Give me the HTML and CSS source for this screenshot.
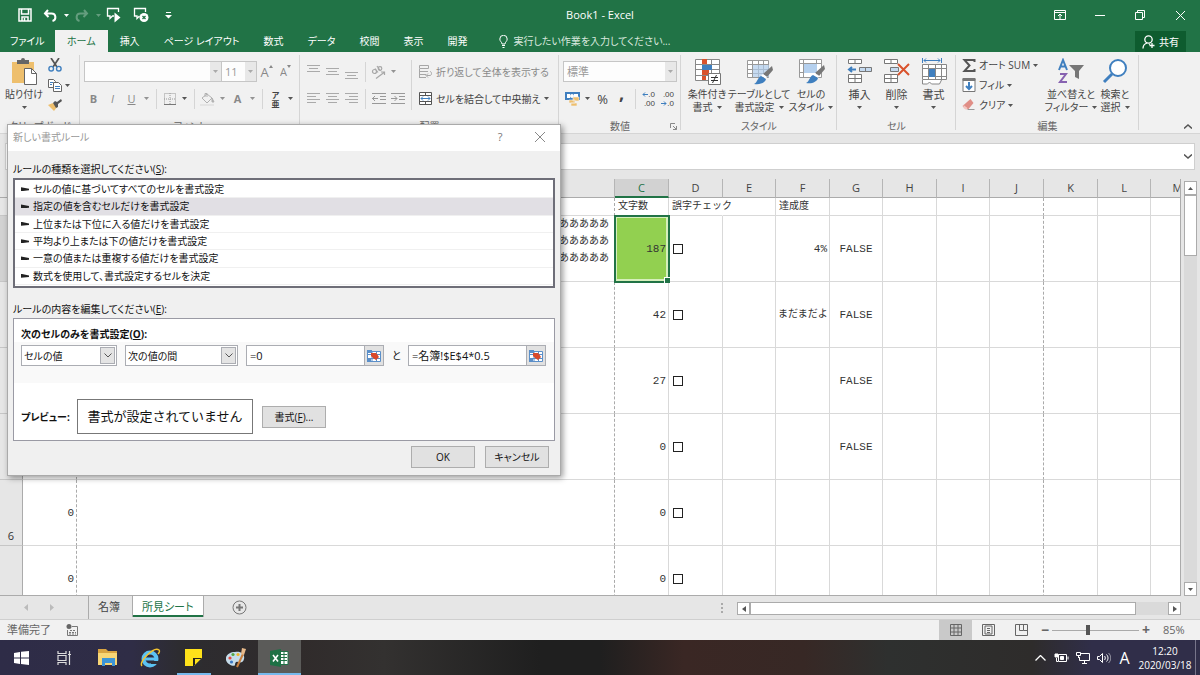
FILE: index.html
```html
<!DOCTYPE html>
<html lang="ja">

<head>
    <meta charset="UTF-8">
    <meta name="viewport" content="width=device-width, initial-scale=1.0">
    <title>Book1 - Excel</title>
    <link rel="stylesheet" href="styles.css">
</head>

<body>
    <svg class="defs" aria-hidden="true">
        <symbol id="down" viewBox="0 0 5 3"><path d="M0 0h5L2.500 3z" /></symbol>
        <symbol id="brush" viewBox="0 0 20 20">
            <path fill="#777" d="M19 1l1 4-6 7-4-3z" />
            <path fill="#fff" d="M10 9l4 3-1 2-5-3z" />
            <path fill="#3f7fbf" d="M8 11l5 3c-1 4-6 6-12 5 4-2 3-6 7-8z" />
        </symbol>
        <symbol id="ref" viewBox="0 0 14 12">
            <path fill="#fff" stroke="#5b8fc9" d="M.5 1.500h13v10H.5zM.5 4.500h13M.5 8.500h13M5 1.500v10M9.500 1.500v10" />
            <path fill="#5b8fc9" d="M0 0h5v3H0zM0 9h4v3H0z" />
            <path fill="#d9492b" d="M4 3h5l1 1 2 3-3 3-3-2-2-2z" />
        </symbol>
    </svg>

    <header class="titlebar">
        <div class="quick">
            <button class="q" aria-label="上書き保存"><svg width="14" height="14" viewBox="0 0 14 14" fill="none" stroke="#fff" stroke-width="1.500"><path d="M1 1h12v12H1zM3.500 1v5h7V1M4 13V9h6v4M6.500 10v3" /></svg></button>
            <button class="q" aria-label="元に戻す"><svg width="14" height="13" viewBox="0 0 14 13" fill="none" stroke="#fff" stroke-width="2"><path d="M5 1L2 4.500 5.500 8M2 4.500h6.500c5 0 5 6.500 1 7.500" /></svg></button>
            <button class="ar light" aria-label="元に戻す一覧"><svg><use href="#down" /></svg></button>
            <button class="q off" aria-label="やり直し"><svg width="14" height="13" viewBox="0 0 14 13" fill="none" stroke="#fff" stroke-width="2"><path d="M9 1l3 3.500L8.500 8M12 4.500H5.500C.5 4.500.5 11 4.500 12" /></svg></button>
            <button class="ar light off" aria-label="やり直し一覧"><svg><use href="#down" /></svg></button>
            <button class="q" aria-label="読み上げ"><svg width="16" height="16" viewBox="0 0 16 16" fill="none" stroke="#fff" stroke-width="1.300"><path d="M8 9H6.500L4 11.500V9H1.500V1.500h11V5" /><path d="M8.500 5.500v10l6-5z" fill="#fff" stroke="none" /></svg></button>
            <button class="q wide" aria-label="読み上げ停止"><svg width="16" height="16" viewBox="0 0 16 16" fill="none" stroke="#fff" stroke-width="1.300"><path d="M6.500 9L4 11.500V9H1.500V1.500h11V5" /><circle cx="11" cy="10.500" r="4.500" fill="#fff" stroke="none" /><path stroke="#217346" d="M9.500 9l3 3M12.500 9l-3 3" /></svg></button>
            <button class="q" aria-label="カスタマイズ"><svg width="7" height="7" viewBox="0 0 7 7" fill="#fff"><path d="M1 0h5v1H1zM0 3h7L3.500 6.500z" /></svg></button>
        </div>
        <h1>Book1 - Excel</h1>
        <div class="winbtns">
            <button aria-label="リボンの表示"><svg width="12" height="10" viewBox="0 0 12 10" fill="none" stroke="#fff"><path d="M.5.5h11v9H.5zM.5 2.500h11M6 9V4M4 6l2-2 2 2" /></svg></button>
            <button aria-label="最小化"><svg width="10" height="10" viewBox="0 0 10 10" stroke="#fff"><path d="M0 5.500h10" /></svg></button>
            <button aria-label="元のサイズ"><svg width="10" height="10" viewBox="0 0 10 10" fill="none" stroke="#fff"><path d="M.5 2.500h7v7h-7zM2.500 2.500v-2h7v7h-2" /></svg></button>
            <button aria-label="閉じる"><svg width="9" height="9" viewBox="0 0 9 9" stroke="#fff"><path d="M0 0l9 9M9 0L0 9" /></svg></button>
        </div>
    </header>

    <nav class="tabs">
        <a href="#" class="file">ファイル</a>
        <a href="#" class="on">ホーム</a>
        <a href="#">挿入</a>
        <a href="#">ページ レイアウト</a>
        <a href="#">数式</a>
        <a href="#">データ</a>
        <a href="#">校閲</a>
        <a href="#">表示</a>
        <a href="#">開発</a>
        <a href="#" class="tell"><svg width="9" height="13" viewBox="0 0 9 13" fill="none" stroke="#fff"><path d="M3 9C3 7 .8 6.500.8 4a3.700 3.700 0 017.400 0C8.200 6.500 6 7 6 9zM3 10.500h3M3.500 12.500h2" /></svg>実行したい作業を入力してください...</a>
        <button class="share"><svg width="13" height="14" viewBox="0 0 13 14" fill="none" stroke="#fff" stroke-width="1.300"><circle cx="6.500" cy="4.500" r="3.700" /><path d="M5 8c-3 1-4 3-4 5.500M7 9l1 .5M10 8v5M7.500 10.500h5" /></svg>共有</button>
    </nav>

    <section class="ribbon">
        <div class="group clip">
            <div class="tools">
                <button class="big paste"><svg width="26" height="27" viewBox="0 0 26 27"><path fill="#eebf6d" d="M1 4h22v21H1z" /><path fill="#666" d="M6 2h4a2 2 0 014 0h4v4H6z" /><path fill="#fff" stroke="#666" d="M13.500 10.500h7l5 5v11h-12z" /><path fill="none" stroke="#666" d="M20.500 10.500v5h5" /></svg><span>貼り付け</span><svg class="dn"><use href="#down" /></svg></button>
                <div class="stack">
                    <button aria-label="切り取り"><svg width="14" height="14" viewBox="0 0 14 14" fill="none" stroke-width="1.700"><path stroke="#555" d="M3 0l6 9M11 0L5 9" /><g stroke="#3f7fbf" stroke-width="1.400"><circle cx="3.200" cy="10.700" r="2.300" /><circle cx="10.800" cy="10.700" r="2.300" /></g></svg></button>
                    <div><button aria-label="コピー"><svg width="14" height="13" viewBox="0 0 14 13" fill="#fff" stroke="#666"><path d="M.5.5h5l2 2v6h-7z" /><path d="M5.500 3.500h5l3 3v6h-8z" /><path stroke="#3f7fbf" d="M2 3.500h3M2 5.500h2M7 7.500h5M7 9.500h5" /></svg></button><button class="ar" aria-label="コピー一覧"><svg><use href="#down" /></svg></button></div>
                    <button aria-label="書式のコピー"><svg width="14" height="12" viewBox="0 0 14 12"><path fill="#eebf6d" d="M0 6l5-2 4 4-3 4z" /><path fill="#555" d="M5 4l2-2 2 1 4-3 1 2-4 3v3L8 9z" /></svg></button>
                </div>
            </div>
            <h2>クリップボード</h2>
        </div>

        <div class="group font">
            <div class="tools rows">
                <div class="row">
                    <label class="combo name"><select aria-label="フォント"><option></option></select><i><svg><use href="#down" /></svg></i></label>
                    <label class="combo size"><select aria-label="サイズ"><option>11</option></select><i><svg><use href="#down" /></svg></i></label>
                    <button class="ic off big-a" aria-label="拡大">A<svg width="4" height="3" viewBox="0 0 4 3"><path d="M0 3h4L2 0z" /></svg></button>
                    <button class="ic off small-a" aria-label="縮小">A<svg width="4" height="3" viewBox="0 0 4 3"><path d="M0 0h4L2 3z" /></svg></button>
                </div>
                <div class="row">
                    <button class="ic off"><b>B</b></button><button class="ic off"><em>I</em></button><button class="ic off"><u>U</u></button><button class="ar off" aria-label="下線一覧"><svg><use href="#down" /></svg></button><span class="sep"></span>
                    <button class="ic" aria-label="罫線"><svg width="12" height="12" viewBox="0 0 12 12" fill="none" stroke="#999"><path stroke-dasharray="1 1" d="M.5.5h11v11H.5zM6 0v12M0 6h12" /><path d="M0 11.500h12" stroke="#777" /></svg></button><button class="ar" aria-label="罫線一覧"><svg><use href="#down" /></svg></button><span class="sep"></span>
                    <button class="ic off" aria-label="塗りつぶし"><svg width="15" height="14" viewBox="0 0 15 14" fill="none" stroke="#888"><path d="M7 2l5 4-5 5-5-5zM5 5V1.500h2V5" /><path fill="#888" d="M12 6l2 4h-2z" /><path stroke="#ddd" stroke-width="2" d="M0 13h14" /></svg></button><button class="ar off" aria-label="色一覧"><svg><use href="#down" /></svg></button><button class="ic off"><b>A</b></button><button class="ar off" aria-label="文字色一覧"><svg><use href="#down" /></svg></button><span class="sep"></span>
                    <button class="ic ruby"><span>ア</span><span>亜</span></button><button class="ar" aria-label="ふりがな一覧"><svg><use href="#down" /></svg></button>
                </div>
            </div>
            <h2>フォント</h2>
        </div>

        <div class="group align">
            <div class="tools">
                <div class="rows">
                    <div class="row">
                        <button class="ic" aria-label="上揃え"><svg width="13" height="14" viewBox="0 0 13 14" stroke="#aaa"><path d="M0 .5h13M2 3.500h9M0 6.500h13" /></svg></button><button class="ic" aria-label="上下中央揃え"><svg width="13" height="14" viewBox="0 0 13 14" stroke="#aaa"><path d="M0 3.500h13M2 6.500h9M0 9.500h13" /></svg></button><button class="ic" aria-label="下揃え"><svg width="13" height="14" viewBox="0 0 13 14" stroke="#aaa"><path d="M0 7.500h13M2 10.500h9M0 13.500h13" /></svg></button><span class="sep"></span>
                        <button class="ic off" aria-label="方向"><svg width="15" height="14" viewBox="0 0 15 14" fill="none" stroke="#777" stroke-width="1.200"><circle cx="3.500" cy="6.500" r="2" /><path d="M4 3.500l3 4M6 1l3.500 5" /><circle cx="9" cy="3.500" r="1.800" /><path d="M5 13.500l8-6M10 7h3.500v3" /></svg></button><button class="ar off" aria-label="方向一覧"><svg><use href="#down" /></svg></button>
                    </div>
                    <div class="row">
                        <button class="ic" aria-label="左揃え"><svg width="13" height="11" viewBox="0 0 13 11" stroke="#aaa"><path d="M0 .5h13M0 3.500h9M0 6.500h13M0 9.500h9" /></svg></button><button class="ic" aria-label="中央揃え"><svg width="13" height="11" viewBox="0 0 13 11" stroke="#aaa"><path d="M0 .5h13M2 3.500h9M0 6.500h13M2 9.500h9" /></svg></button><button class="ic" aria-label="右揃え"><svg width="13" height="11" viewBox="0 0 13 11" stroke="#aaa"><path d="M0 .5h13M4 3.500h9M0 6.500h13M4 9.500h9" /></svg></button><span class="sep"></span>
                        <button class="ic" aria-label="インデント減"><svg width="14" height="11" viewBox="0 0 14 11" fill="none" stroke="#999"><path d="M0 .5h14M8 3.500h6M8 6.500h6M0 10.500h14M0 5.500h6M3 3L.5 5.500 3 8" /></svg></button><button class="ic" aria-label="インデント増"><svg width="14" height="11" viewBox="0 0 14 11" fill="none" stroke="#999"><path d="M0 .5h14M8 3.500h6M8 6.500h6M0 10.500h14M0 5.500h6M3.500 3L6 5.500 3.500 8" /></svg></button>
                    </div>
                </div>
                <span class="sep tall"></span>
                <div class="rows wraps">
                    <button class="row off"><svg class="lead" width="14" height="14" viewBox="0 0 14 14" fill="none" stroke="#777"><path d="M.5.5h9v3h-9zM0 6.500h9M0 9.500h7M0 12.500h7M.5 4v9M9 12.500l-2-2 2-2M7.500 10.500H11c2 0 2-4 0-4" /></svg>折り返して全体を表示する</button>
                    <button class="row"><svg class="lead" width="14" height="13" viewBox="0 0 14 13" fill="#fff" stroke="#555"><path d="M.5.5h12v12H.5zM0 3.500h13M0 9.500h13M6.500 0v3M6.500 10v3" /><path stroke="#3f7fbf" d="M2 6.500h9M4 4.500l-2 2 2 2M9 4.500l2 2-2 2" fill="none" /></svg>セルを結合して中央揃え<span class="ar"><svg><use href="#down" /></svg></span></button>
                </div>
            </div>
            <h2>配置</h2>
        </div>

        <div class="group number">
            <div class="tools rows">
                <div class="row"><label class="combo fmt"><select aria-label="表示形式"><option>標準</option></select><i><svg><use href="#down" /></svg></i></label></div>
                <div class="row">
                    <button class="ic" aria-label="通貨"><svg width="15" height="14" viewBox="0 0 15 14"><path fill="#3f7fbf" d="M0 0h15v8H0z" /><path fill="#fff" d="M2 2h3v4H2zM9 2h4v4H9z" /><circle cx="7" cy="4" r="2" fill="#fff" /><path fill="#eebf6d" stroke="#f1f1f1" stroke-width=".6" d="M8 5h6v4H8zM4 8h6v3H4zM6 11h6v3H6z" /></svg></button><button class="ar" aria-label="通貨一覧"><svg><use href="#down" /></svg></button><button class="ic pct">%</button><button class="ic comma">,</button><span class="sep"></span>
                    <button class="ic dec" aria-label="桁増"><span><svg width="6" height="5" viewBox="0 0 6 5"><path d="M6 2.500H1M3 .5l-2 2 2 2" /></svg>.0</span><span>.00</span></button><button class="ic dec" aria-label="桁減"><span>.00</span><span><svg width="6" height="5" viewBox="0 0 6 5"><path d="M0 2.500h5M3 .5l2 2-2 2" /></svg>.0</span></button>
                </div>
            </div>
            <h2>数値</h2>
            <svg class="launch" width="7" height="7" viewBox="0 0 7 7" fill="none" stroke="#888"><path d="M.5 5V.5H5M3 3l3.500 3.500M6.500 3v3.500H3" /></svg>
        </div>

        <div class="group style">
            <div class="tools">
                <button class="big"><svg width="27" height="27" viewBox="0 0 27 27"><path fill="#fff" stroke="#888" d="M1.500 1.500h24v21h-24zM1 6.500h24M1 11.500h24M1 17.500h24M8.500 1v21M17.500 1v21" /><path fill="#d9532c" d="M8 1h5v5H8zM8 12h7v5H8zM8 18h4v4H8z" /><path fill="#3f7fbf" d="M8 7h10v5H8z" /><path fill="#fff" stroke="#777" d="M14.500 15.500h12v11h-12z" /><path stroke="#333" d="M17 19.500h7M17 22.500h7M22.500 17l-4 8" /></svg><span>条件付き</span><span>書式<svg class="dn"><use href="#down" /></svg></span></button>
                <button class="big"><svg width="27" height="27" viewBox="0 0 27 27"><path fill="#fff" stroke="#999" d="M1.500 2.500h21v17h-21zM1 6.500h21M1 11.500h21M1 15.500h21M6.500 2v17M12.500 2v17M17.500 2v17" /><path fill="#aecbea" opacity=".7" d="M7 7h16v12H7z" /><use href="#brush" x="7" y="7" width="20" height="20" /></svg><span>テーブルとして</span><span>書式設定<svg class="dn"><use href="#down" /></svg></span></button>
                <button class="big"><svg width="27" height="27" viewBox="0 0 27 27"><path fill="#fff" stroke="#999" d="M1.500 1.500h22v18h-22zM1 5.500h22M1 14.500h22M5.500 1v18M18.500 1v18" /><path fill="#b5d0ee" d="M6 6h13v9H6z" /><use href="#brush" x="7" y="6" width="20" height="20" /></svg><span>セルの</span><span>スタイル<svg class="dn"><use href="#down" /></svg></span></button>
            </div>
            <h2>スタイル</h2>
        </div>

        <div class="group cells">
            <div class="tools">
                <button class="big"><svg width="26" height="27" viewBox="0 0 26 27" fill="#fff" stroke="#777"><path d="M1.500 1.500h13v4h-13zM8 1.500v4M1.500 16.500h13v8h-13zM1 20.500h13M8 16.500v8" /><path fill="#c5daf0" d="M12.500 9.500h12v4h-12zM18.500 9v5" /><path stroke="#3f7fbf" stroke-width="2" fill="none" d="M9 11.500H3M5 9l-3 2.500L5 14" /></svg><span>挿入</span><svg class="dn"><use href="#down" /></svg></button>
                <button class="big"><svg width="26" height="27" viewBox="0 0 26 27" fill="#fff" stroke="#777"><path d="M.5 1.500h13v4H.5zM7 1.500v4M.5 16.500h13v8H.5zM0 20.500h13M7 16.500v8" /><path fill="#c5daf0" d="M6.500 9.500h8v4h-8z" /><path stroke="#d9532c" stroke-width="2" d="M14 6l11 11M25 6L14 17" /></svg><span>削除</span><svg class="dn"><use href="#down" /></svg></button>
                <button class="big"><svg width="26" height="27" viewBox="0 0 26 27" fill="#fff" stroke="#888"><path d="M1.500 6.500h24v15h-24zM1 10.500h24M1 18.500h24M7.500 6v15M14.500 6v15M20.500 6v15M1.500 22v4h5l2-2 2 2h8l2-4" /><path fill="#3f7fbf" stroke="none" d="M8 11h6v8H8z" /><path stroke="#3f7fbf" fill="none" d="M1.500 0v5M20.500 0v5M3 2.500h16M5 .5l-2 2 2 2M17 .5l2 2-2 2" /></svg><span>書式</span><svg class="dn"><use href="#down" /></svg></button>
            </div>
            <h2>セル</h2>
        </div>

        <div class="group edit">
            <div class="tools">
                <div class="stack words">
                    <button><svg class="lead" width="13" height="13" viewBox="0 0 13 13" fill="none" stroke="#555" stroke-width="2"><path d="M12 3V1H2l5 5.500L2 12h10v-2" /></svg>オート SUM<span class="ar"><svg><use href="#down" /></svg></span></button>
                    <button><svg class="lead" width="13" height="14" viewBox="0 0 13 14" fill="#fff" stroke="#777"><path d="M.5.5h12v13H.5z" /><path fill="#777" d="M.5.5h12v2H.5z" /><path fill="none" stroke="#3f7fbf" stroke-width="2" d="M6.500 4v7M3.500 8l3 3 3-3" /></svg>フィル<span class="ar"><svg><use href="#down" /></svg></span></button>
                    <button><svg class="lead" width="13" height="12" viewBox="0 0 13 12"><path fill="#e08e86" d="M8 0l3 4-5 6H3L0 7z" /><path fill="#f3c6c0" d="M1 6l4 3-1 2-3-2z" /><path stroke="#999" d="M5 10.500h7" /></svg>クリア<span class="ar"><svg><use href="#down" /></svg></span></button>
                </div>
                <button class="big sort"><svg width="28" height="27" viewBox="0 0 28 27" fill="none" stroke-width="2"><path stroke="#3f7fbf" d="M2 12L6 2l4 10M3.500 8.500h5" /><path stroke="#8762b0" d="M3 16h6l-6 8h7" /><path fill="#777" d="M12 7h15l-5 6v8l-4-2v-6z" /></svg><span>並べ替えと</span><span>フィルター<svg class="dn"><use href="#down" /></svg></span></button>
                <button class="big find"><svg width="26" height="27" viewBox="0 0 26 27" fill="#fff" stroke="#3f7fbf"><circle cx="16" cy="10" r="8" stroke-width="2" /><path stroke-width="3" d="M10 16l-8 8" /></svg><span>検索と</span><span>選択<svg class="dn"><use href="#down" /></svg></span></button>
            </div>
            <h2>編集</h2>
        </div>
        <button class="collapse" aria-label="リボンを折りたたむ"><svg width="8" height="5" viewBox="0 0 8 5" fill="none" stroke="#555" stroke-width="1.500"><path d="M0 4.500L4 1l4 3.500" /></svg></button>
    </section>

    <div class="formula">
        <input type="text" aria-label="数式バー">
        <button aria-label="数式バーの展開"><svg width="8" height="5" viewBox="0 0 8 5" fill="none" stroke="#555" stroke-width="1.500"><path d="M0 .5L4 4 8 .5" /></svg></button>
    </div>

    <main class="work">
        <div class="sheet">
            <table>
                <colgroup>
                    <col class="c-head"><col class="c54"><col><col class="c54"><col class="c54"><col class="c53"><col class="c54"><col class="c53"><col class="c54"><col class="c53"><col class="c54"><col class="c54"><col class="c53"><col class="c54">
                </colgroup>
                <thead>
                    <tr><th></th><th></th><th></th><th class="on">C</th><th>D</th><th>E</th><th>F</th><th>G</th><th>H</th><th>I</th><th>J</th><th>K</th><th>L</th><th>M</th></tr>
                </thead>
                <tbody>
                    <tr class="first"><th></th><td class="dash"></td><td class="dash"></td><td>文字数</td><td class="spill">誤字チェック</td><td></td><td>達成度</td><td></td><td></td><td></td><td class="dash"></td><td></td><td></td><td></td></tr>
                    <tr><th class="on"></th><td class="dash"></td><td class="long">あああああ<br>あああああ<br>あああああ</td><td class="num picked">187</td><td><input type="checkbox" aria-label="誤字チェック 2"></td><td></td><td class="num">4%</td><td class="bool">FALSE</td><td></td><td></td><td class="dash"></td><td></td><td></td><td></td></tr>
                    <tr><th></th><td class="dash"></td><td class="dash"></td><td class="num">42</td><td><input type="checkbox" aria-label="誤字チェック 3"></td><td></td><td class="cut">まだまだよ</td><td class="bool">FALSE</td><td></td><td></td><td class="dash"></td><td></td><td></td><td></td></tr>
                    <tr><th></th><td class="dash"></td><td class="dash"></td><td class="num">27</td><td><input type="checkbox" aria-label="誤字チェック 4"></td><td></td><td></td><td class="bool">FALSE</td><td></td><td></td><td class="dash"></td><td></td><td></td><td></td></tr>
                    <tr><th></th><td class="dash"></td><td class="dash"></td><td class="num">0</td><td><input type="checkbox" aria-label="誤字チェック 5"></td><td></td><td></td><td class="bool">FALSE</td><td></td><td></td><td class="dash"></td><td></td><td></td><td></td></tr>
                    <tr><th>6</th><td class="num dash">0</td><td class="dash"></td><td class="num">0</td><td><input type="checkbox" aria-label="誤字チェック 6"></td><td></td><td></td><td></td><td></td><td></td><td class="dash"></td><td></td><td></td><td></td></tr>
                    <tr><th></th><td class="num dash">0</td><td class="dash"></td><td class="num">0</td><td><input type="checkbox" aria-label="誤字チェック 7"></td><td></td><td></td><td></td><td></td><td></td><td class="dash"></td><td></td><td></td><td></td></tr>
                </tbody>
            </table>
        </div>
        <div class="vscroll">
            <button aria-label="上へ"><svg class="up"><use href="#down" /></svg></button>
            <div class="vthumb"></div>
            <button class="end" aria-label="下へ"><svg><use href="#down" /></svg></button>
        </div>
    </main>

    <div class="sheettabs">
        <div class="arrows"><svg width="4" height="7" viewBox="0 0 4 7"><path d="M4 0v7L0 3.500z" /></svg><svg width="4" height="7" viewBox="0 0 4 7"><path d="M0 0v7l4-3.500z" /></svg></div>
        <a href="#">名簿</a>
        <a href="#" class="on">所見シート</a>
        <button class="add" aria-label="新しいシート"><svg width="15" height="15" viewBox="0 0 15 15" fill="none" stroke="#777"><circle cx="7.500" cy="7.500" r="6.500" /><path stroke-width="2" d="M4 7.500h7M7.500 4v7" /></svg></button>
        <span class="grip"></span>
        <div class="hscroll">
            <button aria-label="左へ"><svg width="4" height="6" viewBox="0 0 4 6"><path d="M4 0v6L0 3z" /></svg></button>
            <div class="hthumb"></div>
            <button class="end" aria-label="右へ"><svg width="4" height="6" viewBox="0 0 4 6"><path d="M0 0v6l4-3z" /></svg></button>
        </div>
    </div>

    <footer class="status">
        <span>準備完了</span>
        <svg class="macro" width="12" height="12" viewBox="0 0 12 12" fill="none" stroke="#777"><path d="M6 2.500h5.500v9h-10V6" /><path d="M4 6.500h6M3 8.500h7M3 10h7" stroke-dasharray="2 1" /><circle cx="3" cy="2.500" r="2.500" fill="#666" stroke="none" /></svg>
        <div class="views">
            <button class="on" aria-label="標準"><svg width="12" height="12" viewBox="0 0 12 12" fill="none" stroke="#666"><path d="M.5.5h11v11H.5zM.5 4h11M.5 8h11M4 .5v11M8 .5v11" /></svg></button>
            <button aria-label="ページ レイアウト"><svg width="13" height="12" viewBox="0 0 13 12" fill="none" stroke="#666"><path d="M.5.5h12v11H.5zM3 2h7v8H3zM5 4.500h3M5 6.500h3M5 8.500h3" /></svg></button>
            <button aria-label="改ページ プレビュー"><svg width="13" height="12" viewBox="0 0 13 12" fill="none" stroke="#666"><path d="M.5.5h12v11H.5zM4.500 0v6.500h4V0M8.500 6.500h4" /></svg></button>
        </div>
        <button class="step">−</button>
        <input class="zoom" type="range" min="10" max="160" value="72" aria-label="ズーム">
        <button class="step">+</button>
        <span class="pct85">85%</span>
    </footer>

    <div class="taskbar">
        <button aria-label="スタート"><svg width="15" height="14" viewBox="0 0 15 14" fill="#fff"><path d="M0 2l6-1v5.500H0zM7 .8L15 0v6.500H7zM0 7.500h6V13l-6-1zM7 7.500h8V14l-8-1z" /></svg></button>
        <button aria-label="タスク ビュー"><svg width="15" height="14" viewBox="0 0 15 14" fill="none" stroke="#ddd" stroke-width="1.200"><path d="M1 0v2.500h8V0M1 14v-2.500h8V14M1 4.500h8v5H1zM12.500 0v14M11 3.500h3" /></svg></button>
        <button aria-label="エクスプローラー"><svg width="20" height="17" viewBox="0 0 20 17"><path fill="#d9a441" d="M0 0h8l2 2h9v4H0z" /><path fill="#f8d675" d="M0 4h19v12H0z" /><path fill="#3d95d6" d="M4 9h13v8h-3v-3H7v3H4z" /></svg></button>
        <button aria-label="Internet Explorer"><svg width="21" height="20" viewBox="0 0 21 20" fill="none"><circle cx="10" cy="11" r="6.500" stroke="#5cc3f2" stroke-width="4" /><path fill="#2f2f37" d="M11 13h9v3h-9z" /><path stroke="#5cc3f2" stroke-width="3" d="M5 11h13" /><path stroke="#f4c430" stroke-width="1.500" d="M2 18C-2 14 14-2 19 2c1 1 0 3-1 4" /></svg></button>
        <button class="run" aria-label="付箋"><svg width="17" height="17" viewBox="0 0 17 17"><path fill="#ffe21a" d="M0 0h17v17H0z" /><path fill="#222" d="M8 9h9l-8 8H8z" /><path fill="#ffe21a" d="M10 10h6l-6 6z" /><path fill="#2d2d30" d="M17 9v8H9z" /></svg></button>
        <button aria-label="ペイント"><svg width="21" height="20" viewBox="0 0 21 20"><path fill="#c6dcea" d="M9 4c7-1 10 3 9 7s-4 4-6 3-3 1-3 3-8 0-9-5 4-8 9-8z" /><circle cx="4" cy="10" r="1.600" fill="#e0483e" /><circle cx="7" cy="6.500" r="1.600" fill="#56a845" /><circle cx="5.500" cy="14" r="1.600" fill="#3b77c2" /><circle cx="12" cy="6.500" r="1.600" fill="#f0b429" /><path stroke="#c97f3d" stroke-width="2" d="M11 19l6-13" /><path fill="#e7b98a" d="M16 0l4 1-2 6-3-1z" /></svg></button>
        <button class="run now" aria-label="Excel"><svg width="19" height="18" viewBox="0 0 19 18"><path fill="#fff" stroke="#1e7145" d="M9 2.500h9v13H9z" /><path stroke="#1e7145" d="M11 5.500h6M11 8.500h6M11 11.500h6M14 3v12" /><path fill="#1e7145" d="M0 2l11-2v18L0 16z" /><path stroke="#fff" stroke-width="1.600" d="M3 6l5 6.500M8 6l-5 6.500" /></svg></button>
        <div class="tray">
            <button aria-label="隠れているインジケーター"><svg width="11" height="6" viewBox="0 0 11 6" fill="none" stroke="#fff" stroke-width="1.300"><path d="M.5 5.500l5-5 5 5" /></svg></button>
            <button aria-label="バッテリー"><svg width="15" height="10" viewBox="0 0 15 10" fill="none" stroke="#fff"><path d="M4.500 1.500h8v7h-8zM14 3.500v3M2.500 5v3.500H4" /><path fill="#fff" d="M6.500 3.500h3v3h-3zM1 1h3v3H1z" /></svg></button>
            <button aria-label="ネットワーク"><svg width="14" height="12" viewBox="0 0 14 12" fill="none" stroke="#fff"><path d="M5 1.500h8.500v7h-10V5M6 11.500h5M8.500 9v2M.5.5h4v3h-4zM2.500 4v2" /></svg></button>
            <button aria-label="音量"><svg width="14" height="12" viewBox="0 0 14 12" fill="none" stroke="#fff"><path d="M.5 4.500h2l3-3v9l-3-3h-2zM7.500 4c1 1 1 3 0 4M9.500 2.500c2 2 2 5 0 7" /><path opacity=".5" d="M11.500 1c3 3 3 7 0 10" /></svg></button>
            <button class="ime">A</button>
            <div class="clock"><span>12:20</span><span>2020/03/18</span></div>
        </div>
    </div>

    <div class="dialog" role="dialog" aria-labelledby="dlg-title">
        <div class="dlg-head">
            <span id="dlg-title">新しい書式ルール</span>
            <button class="help">?</button>
            <button aria-label="閉じる"><svg width="10" height="10" viewBox="0 0 10 10" stroke="#888"><path d="M0 0l10 10M10 0L0 10" /></svg></button>
        </div>
        <div class="dlg-body">
            <p>ルールの種類を選択してください(<u>S</u>):</p>
            <ul class="rules">
                <li>セルの値に基づいてすべてのセルを書式設定</li>
                <li class="on">指定の値を含むセルだけを書式設定</li>
                <li>上位または下位に入る値だけを書式設定</li>
                <li>平均より上または下の値だけを書式設定</li>
                <li>一意の値または重複する値だけを書式設定</li>
                <li>数式を使用して、書式設定するセルを決定</li>
            </ul>
            <p class="second">ルールの内容を編集してください(<u>E</u>):</p>
            <div class="editor">
                <h3>次のセルのみを書式設定(<u>O</u>):</h3>
                <div class="cond">
                    <label class="pick kind"><select aria-label="対象"><option>セルの値</option></select><i><svg width="8" height="5" viewBox="0 0 8 5" fill="none" stroke="#555"><path d="M.5.5L4 4 7.500.5" /></svg></i></label>
                    <label class="pick op"><select aria-label="条件"><option>次の値の間</option></select><i><svg width="8" height="5" viewBox="0 0 8 5" fill="none" stroke="#555"><path d="M.5.5L4 4 7.500.5" /></svg></i></label>
                    <div class="ref"><input type="text" value="=0" aria-label="最小値"><button aria-label="最小値のセル選択"><svg width="14" height="12"><use href="#ref" /></svg></button></div>
                    <span class="to">と</span>
                    <div class="ref"><input type="text" value="=名簿!$E$4*0.5" aria-label="最大値"><button aria-label="最大値のセル選択"><svg width="14" height="12"><use href="#ref" /></svg></button></div>
                </div>
                <div class="preview">
                    <b>プレビュー:</b>
                    <div class="sample">書式が設定されていません</div>
                    <button class="btn">書式(<u>F</u>)...</button>
                </div>
            </div>
            <div class="actions">
                <button class="btn">OK</button>
                <button class="btn">キャンセル</button>
            </div>
        </div>
    </div>
</body>

</html>
```

FILE: styles.css
```css
* {
    box-sizing: border-box;
    margin: 0;
    padding: 0;
}

body {
    height: 100vh;
    display: flex;
    flex-direction: column;
    overflow: hidden;
    background: #e6e6e6;
    color: #444;
    font-family: "Open Sans", "Noto Sans CJK JP", sans-serif;
    font-size: 11px;
    line-height: 14px;
    font-feature-settings: "palt";
    white-space: nowrap;
}

button,
input,
select {
    font: inherit;
    color: inherit;
    font-feature-settings: inherit;
    background: none;
    border: none;
    border-radius: 0;
    outline: none;
}

button {
    display: flex;
    align-items: center;
    justify-content: center;
    white-space: nowrap;
}

select {
    appearance: none;
    width: 100%;
    height: 100%;
}

a {
    color: inherit;
    text-decoration: none;
}

svg {
    flex: none;
}

i {
    font-style: normal;
}

.defs {
    position: absolute;
    width: 0;
    height: 0;
}

.off {
    opacity: .6;
}

/* title bar */
.titlebar {
    flex: none;
    height: 30px;
    display: grid;
    grid-template-columns: 1fr auto 1fr;
    align-items: center;
    background: #217346;
    color: #fff;
}

.titlebar h1 {
    font-size: 11px;
    font-weight: normal;
}

.quick {
    display: flex;
    align-items: center;
    height: 26px;
    padding-left: 15px;
}

.q {
    width: 20px;
    margin-right: 5px;
}

.q.wide {
    width: 24px;
}

.q + .ar {
    margin-left: -4px;
}

.q.off,
.light.off {
    opacity: .3;
}

.winbtns {
    display: flex;
    justify-content: flex-end;
    height: 26px;
}

.winbtns button {
    width: 40px;
}

.ar {
    width: 11px;
    height: 20px;
    display: inline-flex;
    align-items: center;
    justify-content: center;
}

.ar svg,
.dn,
.combo svg,
.vscroll svg {
    width: 5px;
    height: 3px;
    fill: #555;
}

.light svg {
    fill: #fff;
}

/* tabs */
.tabs {
    flex: none;
    height: 22px;
    display: flex;
    background: #217346;
    color: #fff;
    font-size: 10px;
    line-height: 22px;
}

.tabs a {
    padding: 0 12px;
}

.tabs .file {
    width: 55px;
    padding: 0 10px;
}

.tabs .on {
    background: #f1f1f1;
    color: #217346;
}

.tabs .tell {
    display: flex;
    align-items: center;
    gap: 5px;
    padding-left: 20px;
    color: #d9e8df;
}

.share {
    width: 51px;
    gap: 4px;
    margin: 1px 14px 0 auto;
    background: #0e5c2f;
}

/* ribbon */
.ribbon {
    flex: none;
    height: 82px;
    display: flex;
    background: #f1f1f1;
    border-bottom: 1px solid #d5d5d5;
    font-size: 10px;
}

.group {
    position: relative;
    flex: none;
    display: flex;
    flex-direction: column;
    padding: 3px 4px 0;
}

.group::after {
    content: "";
    position: absolute;
    top: 3px;
    bottom: 3px;
    right: 0;
    border-right: 1px solid #d5d5d5;
}

.group h2 {
    margin-top: auto;
    font-size: 10px;
    font-weight: normal;
    line-height: 14px;
    text-align: center;
    color: #666;
}

.tools {
    display: flex;
}

.rows {
    display: flex;
    flex-direction: column;
    padding-top: 3px;
}

.wraps {
    padding-left: 4px;
}

.row {
    display: flex;
    align-items: center;
    justify-content: flex-start;
    height: 27px;
}

.clip {
    width: 80px;
}

.font {
    width: 220px;
}

.align {
    width: 259px;
}

.number {
    width: 122px;
}

.style {
    width: 156px;
    padding-left: 0;
    padding-right: 0;
}

.cells {
    width: 119px;
}

.edit {
    width: 183px;
}

.ic {
    width: 19px;
    height: 20px;
    color: #444;
    font-size: 11px;
}

.big-a {
    font-size: 13px;
}

.ic.small-a svg,
.ic.big-a svg {
    align-self: flex-start;
    margin-top: 3px;
    fill: #444;
}

.sep {
    width: 8px;
    height: 20px;
    background: linear-gradient(#d5d5d5, #d5d5d5) center / 1px 100% no-repeat;
}

.sep.tall {
    height: 50px;
    margin-top: 5px;
}

.ruby {
    flex-direction: column;
    font-size: 8px;
    font-weight: bold;
    line-height: 9px;
}

.lead {
    width: 14px;
    margin-right: 3px;
}

.ic.pct {
    font-size: 13px;
}

.ic.comma {
    font-size: 18px;
    font-weight: bold;
    line-height: 8px;
    align-items: flex-start;
}

.ic.dec {
    flex-direction: column;
    align-items: flex-end;
    padding-right: 3px;
    font-family: "Liberation Sans", sans-serif;
    font-size: 8px;
    line-height: 9px;
}

.dec span {
    display: flex;
    align-items: center;
}

.dec svg {
    fill: none;
    stroke: #3f7fbf;
}

.combo {
    position: relative;
    height: 21px;
    border: 1px solid #c6c6c6;
    background: #fdfdfd;
    color: #999;
    font-size: 11px;
}

.combo select {
    padding-left: 3px;
}

.combo i {
    position: absolute;
    top: 0;
    right: 0;
    width: 11px;
    height: 19px;
    display: flex;
    align-items: center;
    justify-content: center;
    background: #e8e8e8;
    pointer-events: none;
}

.combo svg {
    fill: #aaa;
}

.combo.name {
    width: 138px;
}

.combo.size {
    width: 35px;
    border-left: none;
}

.combo.fmt {
    width: 114px;
}

.launch {
    position: absolute;
    right: 4px;
    bottom: 3px;
}

.big {
    width: 52px;
    flex-direction: column;
    justify-content: flex-start;
    padding-top: 3px;
    line-height: 13px;
}

.big span {
    display: flex;
    align-items: center;
}

.big > svg:first-child {
    margin-bottom: 3px;
}

.big span .dn {
    margin-left: 4px;
}

.big > .dn {
    margin-top: 5px;
}

.cells .big {
    width: 37px;
    font-size: 11px;
}

.paste {
    width: 40px;
}

.find {
    width: 40px;
}

.sort {
    width: 48px;
}

.stack {
    display: flex;
    flex-direction: column;
    align-items: flex-start;
}

.stack > button,
.stack > div {
    display: flex;
    align-items: center;
    height: 20px;
    padding-left: 4px;
}

.words {
    width: 87px;
}

.words > button {
    padding-left: 2px;
}

.collapse {
    margin: auto 8px 3px auto;
    height: 8px;
}

/* formula bar */
.formula {
    flex: none;
    display: flex;
    height: 27px;
    margin: 9px 5px;
    background: #fff;
    border: 1px solid #cfcfcf;
}

.formula input {
    flex: 1;
    min-width: 0;
}

.formula button {
    width: 13px;
}

/* grid */
.work {
    flex: 1;
    min-height: 0;
    display: flex;
    gap: 3px;
    padding-right: 3px;
}

.sheet {
    flex: 1;
    min-width: 0;
    overflow: hidden;
    background: #fff;
    border-right: 1px solid #ababab;
    border-bottom: 1px solid #ababab;
}

.sheet table {
    width: calc(100% + 25px);
    table-layout: fixed;
    border-collapse: separate;
    border-spacing: 0;
    font-family: "Liberation Mono", "Noto Sans CJK JP", monospace;
    font-feature-settings: normal;
    color: #333;
}

.c-head {
    width: 23px;
}

.c54 {
    width: 54px;
}

.c53 {
    width: 53px;
}

.sheet thead th {
    height: 19px;
    background: #e6e6e6;
    border-right: 1px solid #b5b5b5;
    border-bottom: 1px solid #ababab;
    font-family: "Open Sans", sans-serif;
    font-weight: normal;
    line-height: 14px;
    color: #444;
}

.sheet thead th.on {
    background: #d2d2d2;
    border-bottom: 2px solid #217346;
    color: #217346;
}

.sheet tbody th {
    background: #e6e6e6;
    border-right: 1px solid #ababab;
    border-bottom: 1px solid #c6c6c6;
    font-family: "Open Sans", sans-serif;
    font-weight: normal;
    vertical-align: bottom;
    padding-bottom: 2px;
}

.sheet tbody th.on {
    background: #d2d2d2;
}

.sheet td {
    height: 66px;
    padding: 0 3px;
    border-right: 1px solid #d9d9d9;
    border-bottom: 1px solid #d9d9d9;
}

.sheet .first td {
    height: 18px;
    font-size: 10px;
}

.sheet td.dash {
    border-right: 1px dashed #aaa;
}

.sheet td.spill {
    border-right-color: transparent;
}

.sheet .num {
    text-align: right;
    padding-right: 2px;
}

.sheet .bool {
    text-align: center;
}

.sheet .cut {
    padding: 0 0 0 2px;
    font-size: 10px;
    overflow: hidden;
}

.sheet .long {
    padding: 0 5px 0 0;
    vertical-align: top;
    text-align: right;
    font-size: 10px;
    line-height: 17px;
}

.sheet .picked {
    position: relative;
    background: #92d050;
    box-shadow: inset 0 0 0 2px #d6efbc;
    outline: 2px solid #217346;
    outline-offset: -1px;
}

.picked::after {
    content: "";
    position: absolute;
    right: -2px;
    bottom: -2px;
    width: 5px;
    height: 5px;
    background: #217346;
    border: 1px solid #fff;
    border-width: 1px 0 0 1px;
}

.sheet input {
    display: block;
    appearance: none;
    width: 10px;
    height: 10px;
    margin-left: 1px;
    border: 1px solid #222;
    background: #fff;
}

.vscroll {
    display: flex;
    flex-direction: column;
    width: 13px;
    margin-top: 2px;
    background: #dadada;
}

.vscroll button {
    height: 14px;
    border: 1px solid #ababab;
    background: #fff;
}

.vscroll .up {
    transform: rotate(180deg);
}

.vthumb {
    height: 61px;
    background: #fff;
    border: 1px solid #ababab;
}

.end {
    margin-top: auto;
}

/* sheet tabs */
.sheettabs {
    flex: none;
    height: 24px;
    display: flex;
    border-bottom: 1px solid #cfcfcf;
    font-size: 11px;
}

.arrows {
    display: flex;
    align-items: center;
    gap: 22px;
    width: 89px;
    padding-left: 24px;
    border-right: 1px solid #ababab;
    fill: #bbb;
}

.sheettabs a {
    padding: 0 9px;
    margin-bottom: 2px;
    line-height: 21px;
}

.sheettabs a:not(.on) {
    width: 43px;
}

.sheettabs a.on {
    background: #fff;
    color: #217346;
    border: 1px solid #ababab;
    border-width: 0 1px;
    box-shadow: inset 0 -2px #217346;
}

.add {
    margin-left: 28px;
}

.grip {
    width: 2px;
    height: 10px;
    margin: 7px 14px 0 auto;
    background: repeating-linear-gradient(#aaa 0 2px, transparent 2px 4px);
}

.hscroll {
    display: flex;
    width: 37%;
    height: 13px;
    margin: 6px 19px 0 0;
    background: #dadada;
}

.hscroll button {
    width: 13px;
    border: 1px solid #ababab;
    background: #fff;
    fill: #555;
}

.hscroll .end {
    margin: 0 0 0 auto;
}

.hthumb {
    width: 87%;
    background: #fff;
    border: 1px solid #ababab;
}

/* status bar */
.status {
    flex: none;
    height: 20px;
    display: flex;
    align-items: center;
    padding-left: 7px;
    background: #f1f1f1;
    color: #666;
}

.macro {
    margin-left: 15px;
}

.views {
    display: flex;
    align-self: stretch;
    margin-left: auto;
}

.views button {
    width: 33px;
}

.views .on {
    background: #c9c9c9;
}

.step {
    width: 14px;
    font-size: 14px;
    font-weight: bold;
}

.zoom {
    appearance: none;
    width: 87px;
    height: 12px;
    background: linear-gradient(#aaa, #aaa) center / 100% 1px no-repeat;
}

.zoom::-webkit-slider-thumb {
    appearance: none;
    width: 4px;
    height: 10px;
    background: #555;
}

.pct85 {
    width: 47px;
    padding-left: 10px;
}

/* taskbar */
.taskbar {
    flex: none;
    height: 35px;
    display: flex;
    background: linear-gradient(90deg, #2e2c47 0, #2f2d46 11%, #2d2c30 15%, #302b2b 25%, #333130 32%, #1f1f1f 45%, #1f1f1f 50%, #3a2724 57%, #372825 67%, #2e302f 74%, #2e2c2b 86%, #302e49 91%, #302e49);
    color: #fff;
}

.taskbar > button {
    width: 43px;
}

.run {
    background: linear-gradient(#76b9ed, #76b9ed) bottom / 34px 2px no-repeat;
}

.run.now {
    background: linear-gradient(#76b9ed, #76b9ed) bottom / 100% 2px no-repeat, #5b5b59;
}

.tray {
    display: flex;
    margin: 0 4px 0 auto;
    border-right: 1px solid #77758a;
}

.tray button {
    width: 21px;
}

.tray .ime {
    font-size: 16px;
}

.clock {
    display: flex;
    flex-direction: column;
    align-items: center;
    justify-content: center;
    width: 60px;
    font-size: 10px;
}

/* dialog */
.dialog {
    position: absolute;
    left: 7px;
    top: 124px;
    width: 554px;
    background: #f0f0f0;
    color: #111;
    border: 1px solid #aaa;
    box-shadow: 2px 2px 6px rgba(0, 0, 0, .4);
    font-size: 10px;
}

.dlg-head {
    display: flex;
    height: 26px;
    padding: 0 0 2px 5px;
    align-items: center;
    background: #fff;
    color: #999;
}

.dlg-head span {
    flex: 1;
}

.dlg-head button {
    width: 40px;
}

.dlg-head .help {
    font-size: 11px;
    color: #777;
}

.dlg-body {
    padding: 11px 5px 7px;
}

.dlg-body p {
    height: 16px;
}

.dlg-body .second {
    margin-top: 14px;
}

.rules {
    display: grid;
    grid-auto-rows: 1fr;
    height: 110px;
    padding: 1px 0;
    border: 2px solid #6e6e78;
    background: #fff;
    list-style: none;
}

.rules li {
    display: flex;
    align-items: center;
    gap: 4px;
    padding-left: 6px;
    border-bottom: 1px solid #f0f0f0;
}

.rules li::before {
    content: "";
    width: 8px;
    height: 4px;
    background: #222;
    clip-path: polygon(0 0, 100% 40%, 100% 80%, 0 100%);
}

.rules .on {
    background: #e1dfe4;
}

.editor {
    height: 123px;
    padding-top: 7px;
    background: #fff;
    border: 1px solid #9a9aa4;
}

.editor h3 {
    padding-left: 7px;
    font-size: 10px;
    line-height: 16px;
}

.cond {
    display: flex;
    height: 41px;
    padding: 3px 7px 0;
    gap: 8px;
    background: #f9f9f9;
}

.pick,
.ref {
    height: 21px;
    background: #fff;
    border: 1px solid #abadb3;
}

.pick {
    position: relative;
}

.pick select {
    padding-left: 2px;
}

.pick i {
    position: absolute;
    top: 1px;
    right: 1px;
    width: 15px;
    height: 17px;
    display: flex;
    align-items: center;
    justify-content: center;
    background: #e4e4e4;
    border: 1px solid #abadb3;
    pointer-events: none;
}

.kind {
    width: 96px;
}

.op {
    width: 113px;
}

.ref {
    display: flex;
    width: 138px;
    font-size: 11px;
}

.ref input {
    flex: 1;
    min-width: 0;
    padding-left: 3px;
}

.ref button {
    width: 19px;
    background: #e1e1e1;
    border-left: 1px solid #abadb3;
}

.to {
    width: 8px;
    line-height: 20px;
}

.preview {
    display: flex;
    align-items: center;
    margin-top: 16px;
    padding-left: 7px;
}

.preview b {
    width: 56px;
}

.sample {
    width: 176px;
    height: 35px;
    margin-right: 9px;
    border: 1px solid #777;
    font-size: 13px;
    font-feature-settings: normal;
    line-height: 32px;
    text-align: center;
}

.btn {
    width: 64px;
    height: 22px;
    background: #e1e1e1;
    border: 1px solid #adadad;
}

.actions {
    display: flex;
    justify-content: flex-end;
    gap: 10px;
    padding: 5px 6px 0 0;
}
```
